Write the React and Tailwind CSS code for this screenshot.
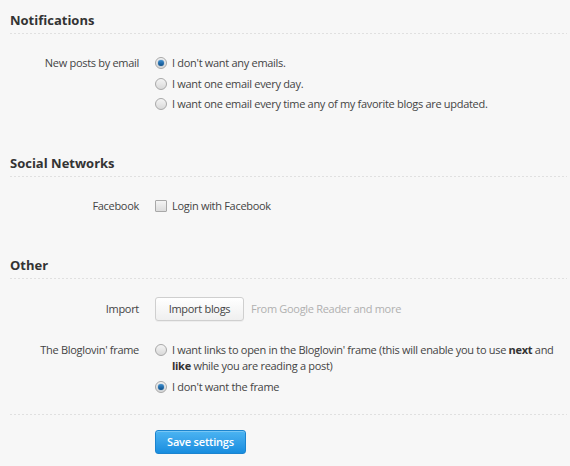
import React from "react";

function Radio({ checked }) {
  return (
    <span className="mt-[2px] mr-[5px] flex h-[12px] w-[12px] shrink-0 items-center justify-center rounded-full border border-[#a8a8a8] bg-gradient-to-b from-[#f4f4f4] to-[#d9d9d9]">
      {checked && (
        <span className="h-[6px] w-[6px] rounded-full bg-gradient-to-b from-[#3d8fd0] to-[#0a4f8a] shadow-[0_0_1px_#0a4f8a]" />
      )}
    </span>
  );
}

function Option({ checked, children }) {
  return (
    <div className="flex items-start">
      <Radio checked={checked} />
      <span>{children}</span>
    </div>
  );
}

function Dots() {
  return <div className="h-px bg-[repeating-linear-gradient(to_right,#e0e0e0_0_2px,transparent_2px_4px)]" />;
}

function Heading({ children, className = "" }) {
  return (
    <div className={className}>
      <h2 className="pb-[3px] text-[13px] font-bold leading-[19px] tracking-[0px] text-[#333]">{children}</h2>
      <Dots />
    </div>
  );
}

export default function App() {
  return (
    <div
      className="min-h-[466px] bg-[#f7f7f7] pl-[10px] pr-[3px] text-[11px] leading-[16px] tracking-[-0.3px] text-[#444]"
      style={{ fontFamily: '"Open Sans", "DejaVu Sans", sans-serif' }}
    >
      <Heading className="pt-[11px]">Notifications</Heading>
      <div className="mt-[21px] grid grid-cols-[129px_1fr] gap-x-[16px]">
        <div className="text-right">New posts by email</div>
        <div className="flex flex-col gap-[4.5px]">
          <Option checked>I don't want any emails.</Option>
          <Option>I want one email every day.</Option>
          <Option>I want one email every time any of my favorite blogs are updated.</Option>
        </div>
      </div>

      <Heading className="mt-[42px]">Social Networks</Heading>
      <div className="mt-[21px] grid grid-cols-[129px_1fr] gap-x-[16px]">
        <div className="text-right">Facebook</div>
        <div className="flex items-start">
          <span className="mt-[2px] mr-[5px] h-[12px] w-[12px] shrink-0 rounded-[1px] border border-[#a8a8a8] bg-gradient-to-b from-[#f4f4f4] to-[#dcdcdc]" />
          <span>Login with Facebook</span>
        </div>
      </div>

      <Heading className="mt-[42px]">Other</Heading>
      <div className="mt-[18px] grid grid-cols-[129px_1fr] items-center gap-x-[16px]">
        <div className="text-right">Import</div>
        <div className="flex items-center">
          <button className="h-[24px] w-[89px] rounded-[3px] border border-[#cfcfcf] bg-gradient-to-b from-[#ffffff] to-[#efefef] text-[11px] tracking-[-0.3px] text-[#444] shadow-[0_1px_0_rgba(0,0,0,0.04)]">
            Import blogs
          </button>
          <span className="ml-[7px] text-[#b0b0b0]">From Google Reader and more</span>
        </div>
      </div>

      <div className="mt-[21px] grid grid-cols-[129px_1fr] gap-x-[16px]">
        <div className="text-right">The Bloglovin' frame</div>
        <div className="flex flex-col gap-[5px]">
          <Option>
            I want links to open in the Bloglovin' frame (this will enable you to use{" "}
            <b className="font-bold text-[#333]">next</b> and{" "}
            <b className="font-bold text-[#333]">like</b> while you are reading a post)
          </Option>
          <Option checked>I don't want the frame</Option>
        </div>
      </div>

      <div className="mt-[19px]">
        <Dots />
      </div>
      <div className="mt-[15px] grid grid-cols-[129px_1fr] gap-x-[16px]">
        <div />
        <div>
          <button className="h-[24px] w-[91px] rounded-[3px] border border-[#1b84cf] bg-gradient-to-b from-[#4bb4f2] to-[#168ddf] text-[11px] font-semibold tracking-[-0.2px] text-white shadow-[inset_0_1px_0_rgba(255,255,255,0.25)]">
            Save settings
          </button>
        </div>
      </div>
    </div>
  );
}
